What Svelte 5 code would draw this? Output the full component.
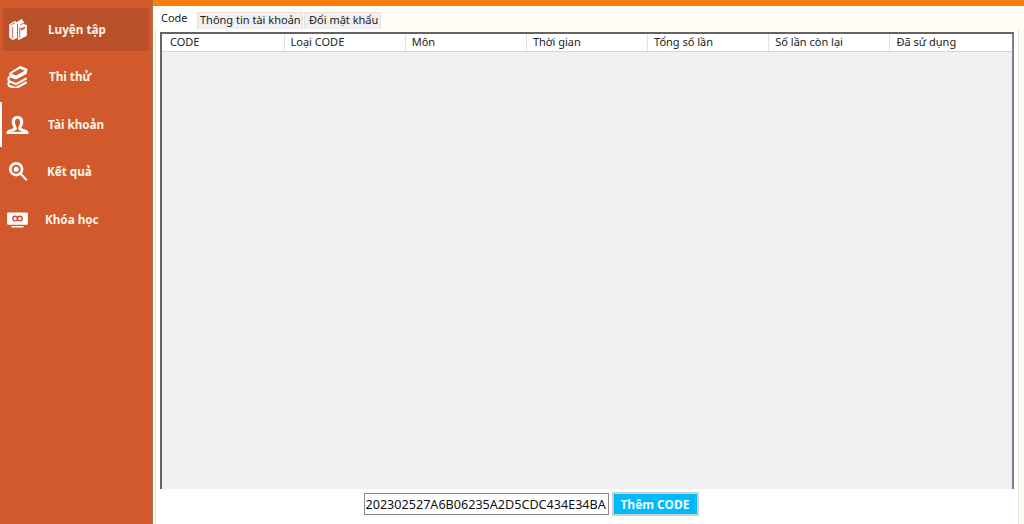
<script>
	const menu = [
		{ label: 'Luyện tập', icon: 'books', indent: 48, active: true },
		{ label: 'Thi thử', icon: 'stack', indent: 49 },
		{ label: 'Tài khoản', icon: 'user', indent: 48, marked: true },
		{ label: 'Kết quả', icon: 'search', indent: 47 },
		{ label: 'Khóa học', icon: 'video', indent: 45 }
	];
	const tabs = ['Code', 'Thông tin tài khoản', 'Đổi mật khẩu'];
	const columns = ['CODE', 'Loại CODE', 'Môn', 'Thời gian', 'Tổng số lần', 'Số lần còn lại', 'Đã sử dụng'];
	let code = '202302527A6B06235A2D5CDC434E34BA';
</script>

<div class="app">
	<aside class="sidebar">
		{#each menu as item}
			<div class="item" class:active={item.active} class:marked={item.marked}>
				<span class="icon">
					{#if item.icon === 'books'}
						<svg width="20" height="23" viewBox="0 0 22 26">
							<path d="M1 7 L8 3 L10 6 L10 23 L5 25 L1 22 Z" fill="#fff" />
							<path d="M9 5 L15 1 L18 5 L18 7 L21 8 L21 20 L12 25 L11 24 L11 7 Z" fill="#fff" />
							<path d="M3 8 L8 5 M13 8 L19 5 M13 10 L13 23 M5 10 L5 23" stroke="#d2592c" stroke-width="1" fill="none" />
							<path d="M14 12 L19 9.500 L19 12 L14 14.500 Z" fill="#d2592c" />
						</svg>
					{:else if item.icon === 'stack'}
						<svg width="22" height="23" viewBox="0 0 22 24">
							<path d="M2 8 L13 1 L21 4 L20 9 L9 15 L3 13 Q1 10 2 8 Z" fill="#fff" />
							<path d="M4 9 L13 4 L18 6 L9 11 Z" fill="#d2592c" />
							<path d="M2 12 Q0 15 2 17 L9 20 L20 14 M2 17 Q0 20 2 22 L9 24 L20 18" stroke="#fff" stroke-width="2.200" fill="none" />
						</svg>
					{:else if item.icon === 'user'}
						<svg width="23" height="18" viewBox="0 0 23 19">
							<path d="M11.500 0 C6 0 5 4 5.500 8 C6 10 7 11.500 7.500 12.500 C7 14 1 14 0 17 L0 19 L23 19 L23 17 C22 14 16 14 15.500 12.500 C16 11.500 17 10 17.500 8 C18 4 17 0 11.500 0 Z" fill="#fff" />
							<path d="M11.500 3 C9.500 3 8.500 5 9 8 C9.500 10 10.500 12 11 13.500 C10.500 15 8 16 6 16.500 L17 16.500 C15 16 12.500 15 12 13.500 C12.500 12 13.500 10 14 8 C14.500 5 13.500 3 11.500 3 Z" fill="#d2592c" />
						</svg>
					{:else if item.icon === 'search'}
						<svg width="20" height="19" viewBox="0 0 22 21">
							<circle cx="9" cy="8" r="6.500" fill="none" stroke="#fff" stroke-width="3" />
							<circle cx="9" cy="8" r="2.800" fill="#fff" />
							<path d="M14 13 L20 19.500" stroke="#fff" stroke-width="2.200" stroke-linecap="round" />
						</svg>
					{:else}
						<svg width="23" height="16" viewBox="0 0 23 17">
							<rect x="0.500" y="0.500" width="22" height="13" rx="1" fill="#fff" />
							<rect x="5" y="15" width="13" height="1.500" fill="#fff" />
							<circle cx="9" cy="7" r="2.500" fill="none" stroke="#c9472a" stroke-width="1.400" />
							<circle cx="14" cy="7" r="2.500" fill="none" stroke="#c9472a" stroke-width="1.400" />
						</svg>
					{/if}
				</span>
				<span class="label" style="left: {item.indent}px">{item.label}</span>
			</div>
		{/each}
	</aside>

	<main class="content">
		<div class="topbar"></div>
		<div class="tabs">
			{#each tabs as tab, i}
				<div class="tab" class:selected={i === 0}>{tab}</div>
			{/each}
		</div>
		<div class="panel">
			<div class="table">
				<div class="head">
					{#each columns as col}
						<div class="col">{col}</div>
					{/each}
				</div>
				<div class="rows"></div>
			</div>
			<div class="actions">
				<input class="code" type="text" bind:value={code} />
				<button class="add">Thêm CODE</button>
			</div>
		</div>
	</main>
</div>

<style>
	:global(body) {
		margin: 0;
		background: #fff;
	}

	.app {
		display: flex;
		width: 1024px;
		height: 524px;
		overflow: hidden;
		font-family: 'Noto Sans', 'Open Sans', sans-serif;
	}

	.sidebar {
		width: 153px;
		flex: none;
		box-sizing: border-box;
		padding-top: 8px;
		background: #d2592c;
		border-right: 1px solid #a9764f;
	}

	.item {
		position: relative;
		display: flex;
		align-items: center;
		height: 43px;
		margin: 0 3px 4px 3px;
		color: #fff5ea;
		font-size: 11.700px;
		font-weight: 700;
	}

	.item:nth-child(even) {
		margin-bottom: 5px;
	}

	.item.active {
		background: #b9502a;
	}

	.item.marked::before {
		content: '';
		position: absolute;
		left: -3px;
		top: -1px;
		width: 2px;
		height: 45px;
		background: #fff;
	}

	.icon {
		display: flex;
		justify-content: center;
		width: 29px;
	}

	.label {
		position: absolute;
		margin-left: -3px;
		margin-top: -1px;
	}

	.content {
		flex: 1;
		display: flex;
		flex-direction: column;
		min-width: 0;
		background: #fffdf4;
	}

	.topbar {
		height: 6px;
		flex: none;
		background: #fb7d0b;
	}

	.tabs {
		display: flex;
		align-items: flex-end;
		height: 23px;
		flex: none;
		padding-left: 3px;
		font-size: 11px;
		color: #222;
		white-space: nowrap;
	}

	.tab {
		box-sizing: border-box;
		height: 17px;
		line-height: 14px;
		padding-left: 2px;
		background: #f0f0f0;
		border: 1px solid #e3e3e3;
		border-bottom: none;
	}

	.tab:nth-child(2) {
		width: 106px;
		margin-left: 1px;
	}

	.tab:nth-child(3) {
		width: 77px;
		margin-left: 1px;
		padding-left: 4px;
	}

	.tab.selected {
		width: 40px;
		height: 20px;
		padding-left: 4px;
		line-height: 16px;
		background: #fff;
		border-color: #fff;
	}

	.panel {
		flex: 1;
		display: flex;
		flex-direction: column;
		min-height: 0;
		margin: 0 5px 0 2px;
		background: #fff;
		border-left: 1px solid #e4e4e4;
		border-right: 1px solid #e4e4e4;
		padding: 3px 4px 0 4px;
		font-size: 11px;
	}

	.table {
		flex: 1;
		display: flex;
		flex-direction: column;
		min-height: 0;
		background: #f0f0f0;
		border-left: 2px solid #646464;
		border-top: 2px solid #646464;
		border-right: 2px solid #808080;
	}

	.head {
		display: flex;
		height: 17px;
		flex: none;
		background: #fff;
		border-bottom: 1px solid #d5d5d5;
		color: #222;
	}

	.col {
		width: 121.200px;
		box-sizing: border-box;
		padding-left: 6px;
		line-height: 16px;
		border-right: 1px solid #e0e0e0;
	}

	.col:first-child {
		width: 122.500px;
		padding-left: 8px;
	}

	.col:last-child {
		border-right: none;
	}

	.rows {
		flex: 1;
	}

	.actions {
		display: flex;
		justify-content: center;
		align-items: flex-start;
		gap: 3px;
		height: 35px;
		flex: none;
		padding: 3px 112px 0 0;
		box-sizing: border-box;
	}

	.code {
		width: 245px;
		height: 22px;
		margin-top: 1px;
		box-sizing: border-box;
		padding: 0 0 0 1px;
		border: 1px solid #8a8a8a;
		outline: none;
		font-family: inherit;
		font-size: 12.600px;
		color: #111;
	}

	.add {
		width: 87px;
		height: 24px;
		padding: 0;
		background: #00b9f8;
		border: 2px solid #d0d0d0;
		color: #eefbff;
		font-family: inherit;
		font-size: 12px;
		font-weight: 700;
	}
</style>
